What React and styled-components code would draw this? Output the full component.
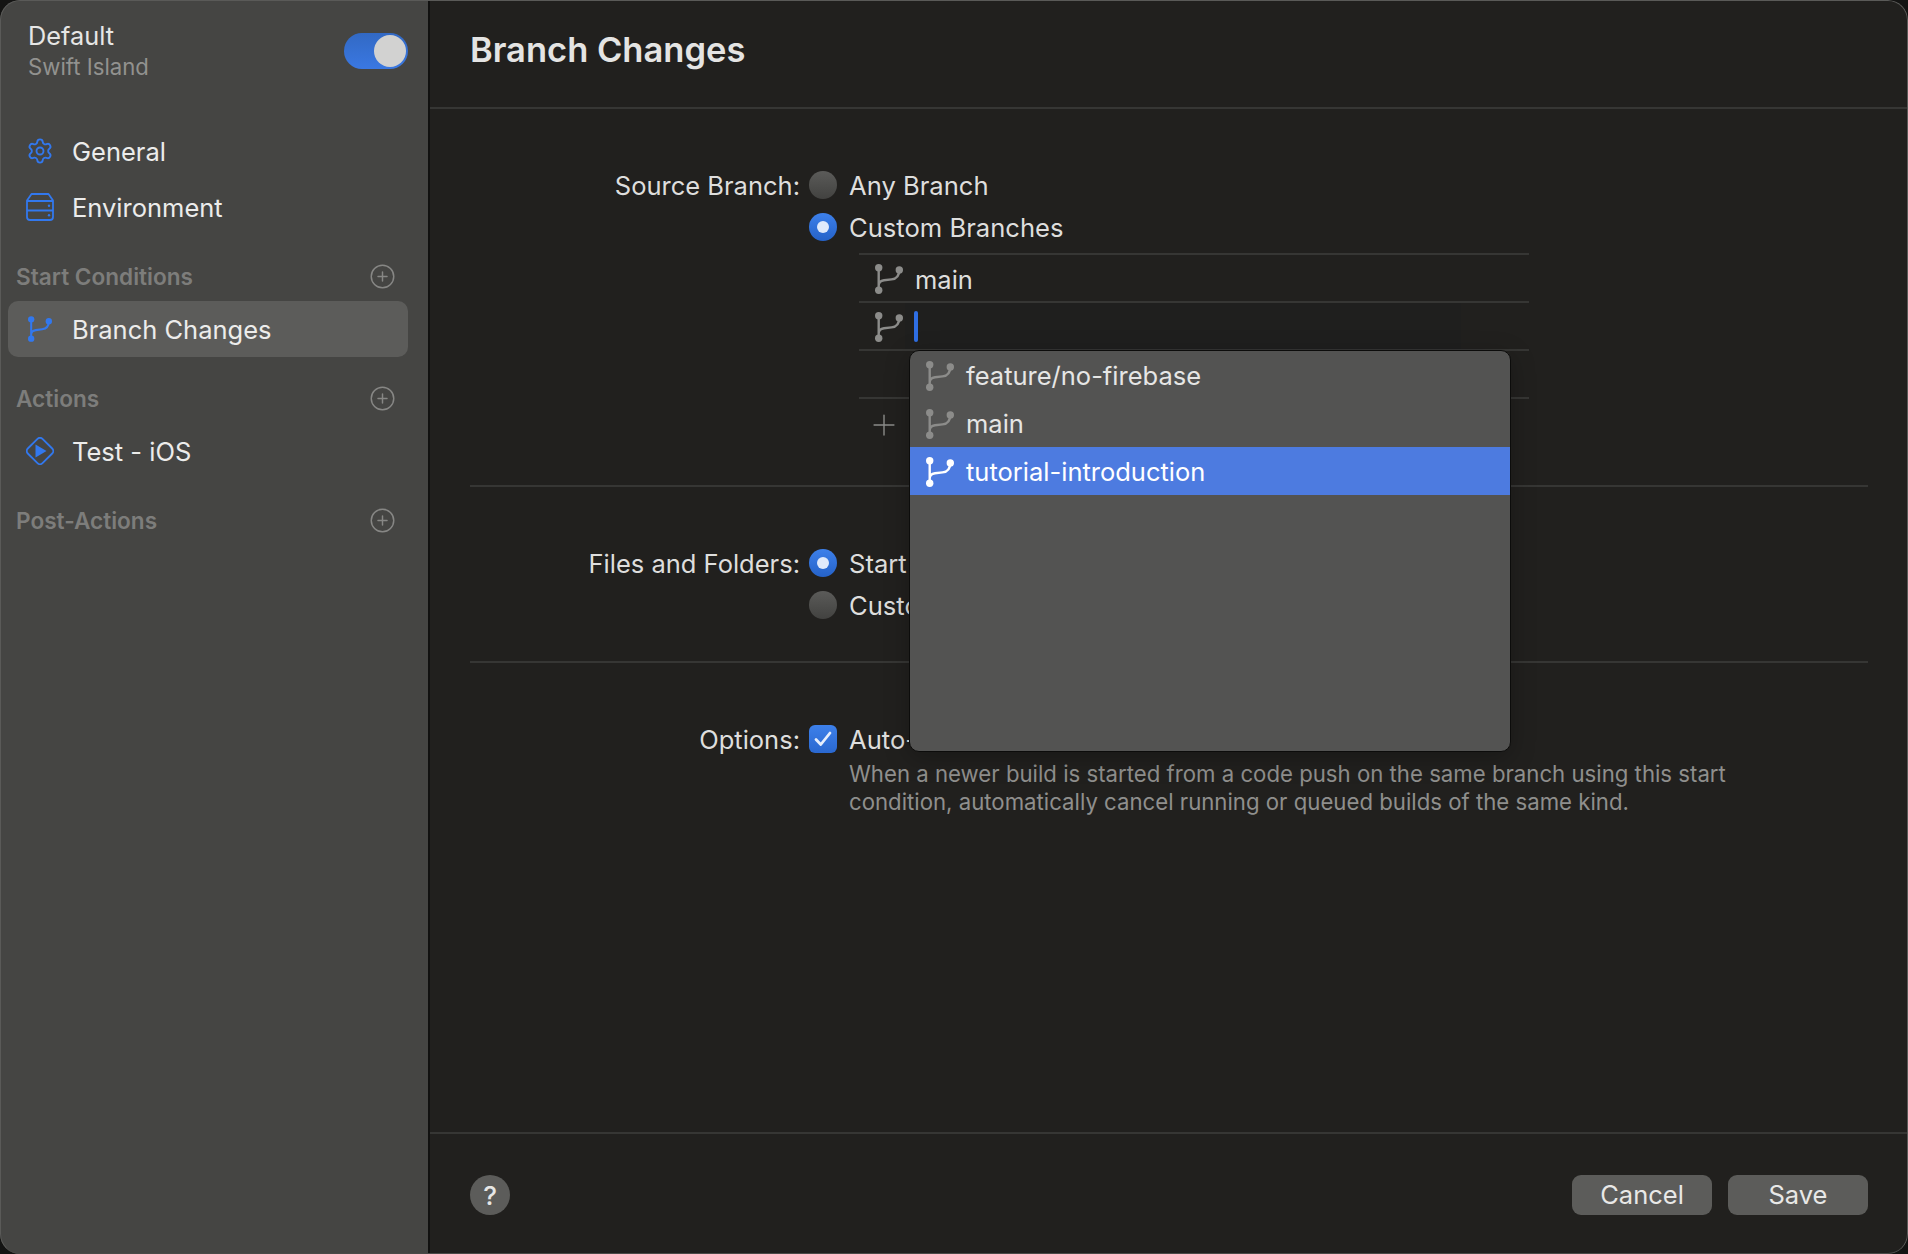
import React from "react";
import styled, { createGlobalStyle } from "styled-components";
import { Settings, CirclePlus, Plus } from "lucide-react";

const Global = createGlobalStyle`
    * { box-sizing : border-box; }
    html, body {
        margin : 0;
        padding : 0;
        background : #141413;
    }
    body {
        font-family : Inter, "Liberation Sans", sans-serif;
        color : #e4e4e3;
    }
`;

const Window = styled.div`
    width : 1908px;
    height : 1254px;
    display : flex;
    overflow : hidden;
    border-radius : 20px;
    background : #21201e;
    position : relative;
    &::after {
        content : "";
        position : absolute;
        inset : 0;
        border-radius : 20px;
        border : 1.5px solid #5a5a58;
        border-bottom-color : #4a4a48;
        pointer-events : none;
    }
`;

const Sidebar = styled.aside`
    width : 430px;
    flex : none;
    height : 100%;
    background : #454543;
    border-right : 2px solid #111110;
    padding : 0 20px 0 8px;
`;

const Profile = styled.div`
    height : 123px;
    padding : 20px 0 0 20px;
    display : flex;
    justify-content : space-between;
    align-items : flex-start;
`;

const ProfileName = styled.div`
    font-size : 25.3px;
    line-height : 32px;
    color : #e6e6e5;
`;

const ProfileSub = styled.div`
    font-size : 22.2px;
    line-height : 30px;
    color : #92928f;
`;

const Toggle = styled.div`
    width : 64px;
    height : 36px;
    margin-top : 13px;
    border-radius : 18px;
    padding : 2px;
    display : flex;
    justify-content : flex-end;
    background : linear-gradient(#3269c4, #3a78e2);
`;

const Knob = styled.div`
    width : 32px;
    height : 32px;
    border-radius : 50%;
    background : #d2d2d1;
`;

const Group = styled.div`
    margin-bottom : 18px;
`;

const GroupHead = styled.div`
    height : 48px;
    padding : 0 12px 1px 8px;
    display : flex;
    align-items : center;
    justify-content : space-between;
    font-size : 22.6px;
    font-weight : 600;
    color : #7d7d7b;
`;

const NavItem = styled.div`
    height : 56px;
    padding-left : 18px;
    display : flex;
    align-items : center;
    gap : 18px;
    font-size : 25.5px;
    color : #ececeb;
    border-radius : 10px;
    background : ${props => props.$active ? "#5c5c5a" : "transparent"};
`;

const NavIcon = styled.span`
    width : 28px;
    height : 28px;
    display : flex;
    align-items : center;
    justify-content : center;
    color : #3278ee;
`;

const Main = styled.main`
    flex : 1;
    min-width : 0;
    height : 100%;
    display : flex;
    flex-direction : column;
`;

const TitleBar = styled.header`
    height : 109px;
    flex : none;
    padding : 0 40px 8px;
    display : flex;
    align-items : center;
    border-bottom : 2px solid #363634;
`;

const Title = styled.h1`
    margin : 0;
    font-size : 34.5px;
    font-weight : 600;
    color : #e4e4e3;
`;

const Body = styled.div`
    flex : 1;
    padding : 0 40px;
`;

const Section = styled.section`
    padding-top : 55px;
    height : ${props => props.$height}px;
    border-bottom : ${props => props.$last ? "none" : "2px solid #363634"};
`;

const FormRow = styled.div`
    display : grid;
    grid-template-columns : 330px 1fr;
    column-gap : 9px;
`;

const Label = styled.div`
    height : 42px;
    line-height : 44px;
    text-align : right;
    font-size : 25.5px;
    color : #dededd;
`;

const Choice = styled.div`
    height : 42px;
    display : flex;
    align-items : center;
    gap : 12px;
    font-size : 25.6px;
    color : #dededd;
    white-space : nowrap;
`;

const Radio = styled.span`
    width : 28px;
    height : 28px;
    flex : none;
    border-radius : 50%;
    display : flex;
    align-items : center;
    justify-content : center;
    background : ${props => props.$on
        ? "linear-gradient(#3d80ea, #2562c8)"
        : "linear-gradient(#5b5b59, #424240)"};
    &::after {
        content : "";
        display : ${props => props.$on ? "block" : "none"};
        width : 12px;
        height : 12px;
        border-radius : 50%;
        background : #e0eafb;
    }
`;

const CheckBox = styled.span`
    width : 28px;
    height : 28px;
    flex : none;
    border-radius : 6px;
    display : flex;
    align-items : center;
    justify-content : center;
    background : linear-gradient(#3d80ea, #2a68d0);
`;

const BranchTable = styled.div`
    width : 670px;
    margin : 5px 0 0 50px;
`;

const BranchRow = styled.div`
    height : 48px;
    padding : 2px 0 0 16px;
    border-top : 2px solid #363634;
    display : flex;
    align-items : center;
    gap : 12px;
    font-size : 25.5px;
    color : #dededd;
    position : relative;
`;

const Field = styled.div`
    position : absolute;
    left : 46px;
    top : 0;
    width : 556px;
    height : 100%;
    background : #1f1f1e;
    display : flex;
    align-items : center;
    padding-left : 9px;
`;

const Caret = styled.span`
    width : 4px;
    height : 31px;
    border-radius : 2px;
    background : #2f6fe4;
`;

const AddRow = styled.div`
    height : 54px;
    padding-left : 8px;
    border-top : 2px solid #363634;
    display : flex;
    align-items : center;
    color : #8b8b89;
`;

const Popover = styled.div`
    position : absolute;
    z-index : 5;
    left : 50px;
    top : calc(100% + 1px);
    width : 602px;
    height : 402px;
    border : 1px solid #0c0c0b;
    border-radius : 10px;
    overflow : hidden;
    background : #535352;
    box-shadow : 0 6px 24px rgba(0,0,0,0.25);
`;

const PopItem = styled.div`
    height : 48px;
    padding : 1px 0 0 16px;
    display : flex;
    align-items : center;
    gap : 12px;
    font-size : 25.5px;
    color : ${props => props.$active ? "#ffffff" : "#e6e6e5"};
    background : ${props => props.$active ? "#4d7be0" : "transparent"};
`;

const Description = styled.p`
    margin : 0 0 0 40px;
    font-size : 22.2px;
    line-height : 28px;
    color : #8f8f8d;
    white-space : nowrap;
`;

const Footer = styled.footer`
    height : 122px;
    flex : none;
    padding : 41px 40px 0;
    border-top : 2px solid #363634;
    display : flex;
    align-items : flex-start;
    justify-content : space-between;
`;

const HelpButton = styled.div`
    width : 40px;
    height : 40px;
    border-radius : 50%;
    background : #5c5c5a;
    display : flex;
    align-items : center;
    justify-content : center;
    font-size : 26px;
    font-weight : 500;
    color : #e6e6e5;
`;

const ButtonGroup = styled.div`
    display : flex;
    gap : 16px;
`;

const Button = styled.div`
    width : 140px;
    height : 40px;
    padding-bottom : 2px;
    border-radius : 9px;
    background : #5c5c5a;
    display : flex;
    align-items : center;
    justify-content : center;
    font-size : 25.5px;
    color : #e8e8e7;
`;

const BranchIcon = ({ color = "#8c8c8a", width = 28, height = 30 }) => (
    <svg width={width} height={height} viewBox="0 0 28 30" fill="none" style={{ flex : "none" }}>
        <path d="M3.7 3.7V26.3M3.7 21.5C3.7 18 5.5 16.8 9 16.3L16.5 15.4C21.5 14.8 24.3 11.5 24.3 6" stroke={color} strokeWidth="2.4" />
        <circle cx="3.7" cy="3.7" r="3.7" fill={color} />
        <circle cx="3.7" cy="26.3" r="3.7" fill={color} />
        <circle cx="24.3" cy="6" r="3.7" fill={color} />
    </svg>
);

const ServerIcon = () => (
    <svg width="28" height="28" viewBox="0 0 28 28" fill="none" stroke="currentColor" strokeWidth="1.8">
        <path d="M1 24V7.5L5.5 1H22.5L27 7.5V24C27 26 26 27 24 27H4C2 27 1 26 1 24Z" strokeLinejoin="round" />
        <path d="M1 8H27M1 17.500H27" />
        <circle cx="23" cy="12.800" r="1.200" fill="currentColor" stroke="none" />
        <circle cx="23" cy="22.300" r="1.200" fill="currentColor" stroke="none" />
    </svg>
);

const ActionIcon = () => (
    <svg width="28" height="28" viewBox="0 0 28 28" fill="none">
        <path d="M11.500 1.800C12.900 .4 15.100 .4 16.500 1.800L26.200 11.500C27.600 12.900 27.600 15.100 26.200 16.500L16.500 26.200C15.100 27.600 12.900 27.600 11.500 26.200L1.800 16.500C.4 15.100 .4 12.900 1.800 11.500Z" stroke="currentColor" strokeWidth="1.800" />
        <path d="M9.500 7.500L20.500 14L9.500 20.500Z" fill="currentColor" />
    </svg>
);

const SectionHead = ({ title }) => (
    <GroupHead>
        {title}
        <CirclePlus size={27} strokeWidth={1.3} color="#878785" />
    </GroupHead>
);

const App = () => (
    <Window>
        <Global />
        <Sidebar>
            <Profile>
                <div>
                    <ProfileName>Default</ProfileName>
                    <ProfileSub>Swift Island</ProfileSub>
                </div>
                <Toggle><Knob /></Toggle>
            </Profile>
            <Group>
                <NavItem>
                    <NavIcon><Settings size={32} strokeWidth={1.6} /></NavIcon>
                    General
                </NavItem>
                <NavItem>
                    <NavIcon><ServerIcon /></NavIcon>
                    Environment
                </NavItem>
            </Group>
            <Group>
                <SectionHead title="Start Conditions" />
                <NavItem $active>
                    <NavIcon><BranchIcon color="#3278ee" width={24} height={26} /></NavIcon>
                    Branch Changes
                </NavItem>
            </Group>
            <Group>
                <SectionHead title="Actions" />
                <NavItem>
                    <NavIcon><ActionIcon /></NavIcon>
                    Test - iOS
                </NavItem>
            </Group>
            <Group>
                <SectionHead title="Post-Actions" />
            </Group>
        </Sidebar>
        <Main>
            <TitleBar>
                <Title>Branch Changes</Title>
            </TitleBar>
            <Body>
                <Section $height={378}>
                    <FormRow>
                        <Label>Source Branch:</Label>
                        <div>
                            <Choice><Radio />Any Branch</Choice>
                            <Choice><Radio $on />Custom Branches</Choice>
                            <BranchTable>
                                <BranchRow>
                                    <BranchIcon />
                                    main
                                </BranchRow>
                                <BranchRow>
                                    <BranchIcon />
                                    <Field><Caret /></Field>
                                    <Popover>
                                        <PopItem>
                                            <BranchIcon />
                                            feature/no-firebase
                                        </PopItem>
                                        <PopItem>
                                            <BranchIcon />
                                            main
                                        </PopItem>
                                        <PopItem $active>
                                            <BranchIcon color="#ffffff" />
                                            tutorial-introduction
                                        </PopItem>
                                    </Popover>
                                </BranchRow>
                                <BranchRow />
                                <AddRow>
                                    <Plus size={34} strokeWidth={1} />
                                </AddRow>
                            </BranchTable>
                        </div>
                    </FormRow>
                </Section>
                <Section $height={176}>
                    <FormRow>
                        <Label>Files and Folders:</Label>
                        <div>
                            <Choice><Radio $on />Start Build on All Changes</Choice>
                            <Choice><Radio />Custom Conditions</Choice>
                        </div>
                    </FormRow>
                </Section>
                <Section $last>
                    <FormRow>
                        <Label>Options:</Label>
                        <div>
                            <Choice>
                                <CheckBox>
                                    <svg width="18" height="16" viewBox="0 0 18 16" fill="none">
                                        <path d="M2 8.500L6.800 13.500L16 2" stroke="#e6eefc" strokeWidth="2.800" strokeLinecap="round" strokeLinejoin="round" />
                                    </svg>
                                </CheckBox>
                                Auto-cancel Builds
                            </Choice>
                            <Description>
                                When a newer build is started from a code push on the same branch using this start<br />
                                condition, automatically cancel running or queued builds of the same kind.
                            </Description>
                        </div>
                    </FormRow>
                </Section>
            </Body>
            <Footer>
                <HelpButton>?</HelpButton>
                <ButtonGroup>
                    <Button>Cancel</Button>
                    <Button>Save</Button>
                </ButtonGroup>
            </Footer>
        </Main>
    </Window>
);

export default App;
